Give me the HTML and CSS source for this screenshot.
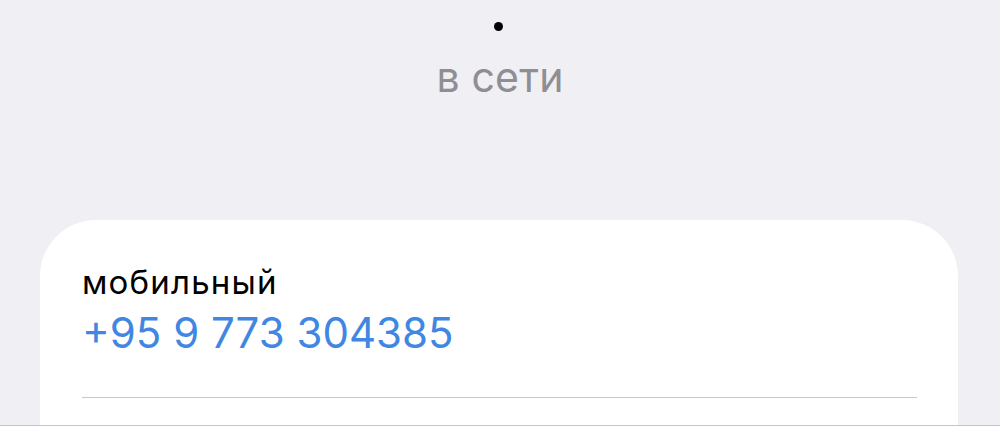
FILE: index.html
```html
<!DOCTYPE html>
<html lang="ru">
<head>
<meta charset="utf-8">
<link rel="stylesheet" href="styles.css">
</head>
<body>
<div class="page">
  <header class="header">
    <span class="dot"></span>
    <div class="status">в сети</div>
  </header>
  <section class="card">
    <div class="row">
      <div class="label">мобильный</div>
      <div class="phone">+95 9 773 304385</div>
    </div>
    <div class="sep"></div>
  </section>
</div>
</body>
</html>
```

FILE: styles.css
```css
html, body {
  margin: 0;
  padding: 0;
}
body {
  width: 1000px;
  height: 426px;
  overflow: hidden;
  background: #efeff4;
  font-family: Inter, "Liberation Sans", Arial, sans-serif;
}
.page {
  height: 425px;
  border-bottom: 1px solid #c4c4c8;
  overflow: hidden;
}
.header {
  display: flex;
  flex-direction: column;
  align-items: center;
  padding-top: 22px;
}
.dot {
  width: 9px;
  height: 9px;
  border-radius: 50%;
  background: #000;
  margin-left: -4px;
}
.status {
  margin-top: 25px;
  font-size: 41px;
  line-height: 42px;
  letter-spacing: 0.2px;
  color: #8e8e93;
}
.card {
  margin: 122px 0 0 40px;
  width: 918px;
  height: 210px;
  background: #fff;
  border-radius: 56px 56px 0 0;
  padding: 44px 41px 0 42px;
  box-sizing: border-box;
}
.label {
  font-size: 33px;
  line-height: 36px;
  letter-spacing: 1.2px;
  color: #000;
}
.phone {
  margin-top: 9px;
  font-size: 42px;
  line-height: 48px;
  color: #3f87e2;
}
.sep {
  margin-top: 40px;
  height: 1px;
  background: #c8c7cc;
}
```
